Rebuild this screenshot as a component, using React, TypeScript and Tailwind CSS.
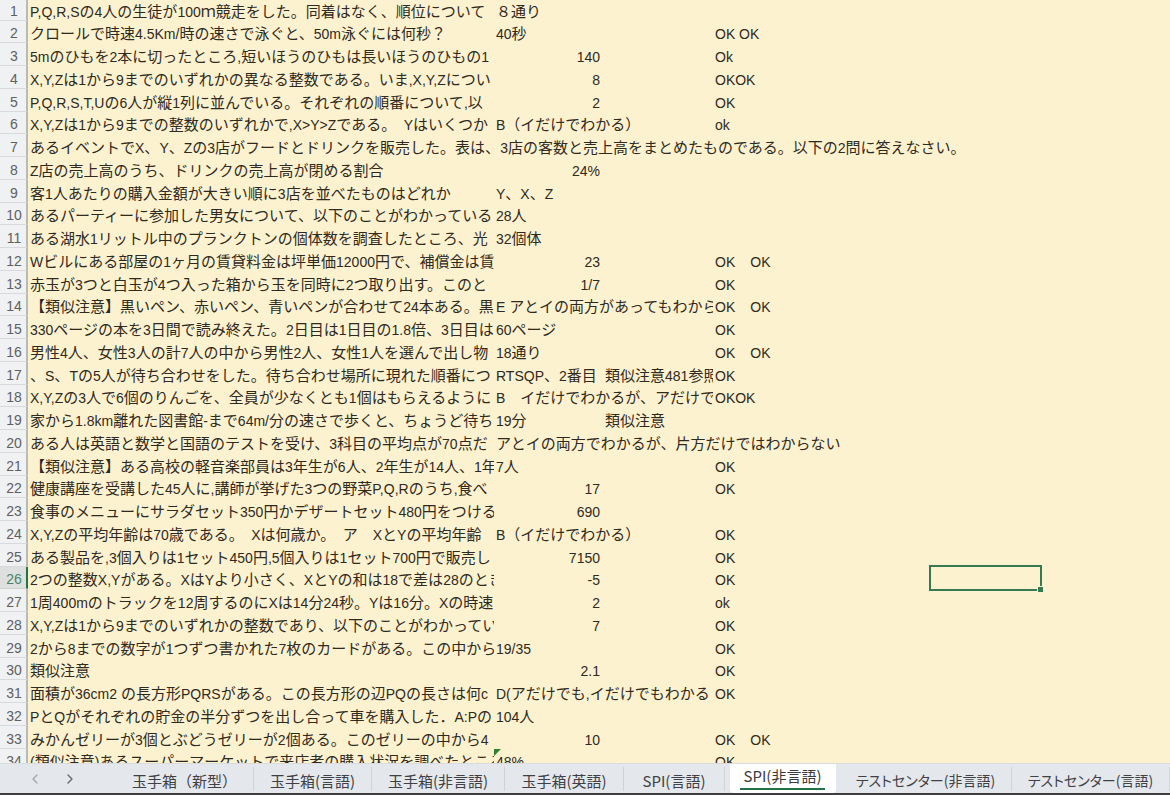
import { ChevronLeft, ChevronRight } from 'lucide-react';

type Cell = { text: string; span?: number; align?: 'right'; flagged?: boolean };

const n = (text: string): Cell => ({ text, align: 'right' });
const t = (text: string, span = 1): Cell => ({ text, span });
const gap = (span = 1): Cell => ({ text: '', span });

const rows: Cell[][] = [
  [t('P,Q,R,Sの4人の生徒が100ｍ競走をした。同着はなく、順位について'), t('８通り')],
  [t('クロールで時速4.5Km/時の速さで泳ぐと、50m泳ぐには何秒？'), t('40秒'), gap(), t('OK OK')],
  [t('5mのひもを2本に切ったところ,短いほうのひもは長いほうのひもの1'), n('140'), gap(), t('Ok')],
  [t('X,Y,Zは1から9までのいずれかの異なる整数である。いま,X,Y,Zについ'), n('8'), gap(), t('OKOK')],
  [t('P,Q,R,S,T,Uの6人が縦1列に並んでいる。それぞれの順番について,以'), n('2'), gap(), t('OK')],
  [t('X,Y,Zは1から9までの整数のいずれかで,X>Y>Zである。　Yはいくつか'), t('B（イだけでわかる）', 2), t('ok')],
  [t('あるイベントでX、Y、Zの3店がフードとドリンクを販売した。表は、3店の客数と売上高をまとめたものである。以下の2問に答えなさい。', 6)],
  [t('Z店の売上高のうち、ドリンクの売上高が閉める割合'), n('24%')],
  [t('客1人あたりの購入金額が大きい順に3店を並べたものはどれか'), t('Y、X、Z')],
  [t('あるパーティーに参加した男女について、以下のことがわかっている'), t('28人')],
  [t('ある湖水1リットル中のプランクトンの個体数を調査したところ、光'), t('32個体')],
  [t('Wビルにある部屋の1ヶ月の賃貸料金は坪単価12000円で、補償金は賃'), n('23'), gap(), t('OK　OK')],
  [t('赤玉が3つと白玉が4つ入った箱から玉を同時に2つ取り出す。このと'), n('1/7'), gap(), t('OK')],
  [t('【類似注意】黒いペン、赤いペン、青いペンが合わせて24本ある。黒'), t('E アとイの両方があってもわから', 2), t('OK　OK')],
  [t('330ページの本を3日間で読み終えた。2日目は1日目の1.8倍、3日目は'), t('60ページ'), gap(), t('OK')],
  [t('男性4人、女性3人の計7人の中から男性2人、女性1人を選んで出し物'), t('18通り'), gap(), t('OK　OK')],
  [t('、S、Tの5人が待ち合わせをした。待ち合わせ場所に現れた順番につ'), t('RTSQP、2番目'), t('類似注意481参照'), t('OK')],
  [t('X,Y,Zの3人で6個のりんごを、全員が少なくとも1個はもらえるように'), t('B　イだけでわかるが、アだけで', 2), t('OKOK')],
  [t('家から1.8km離れた図書館-まで64m/分の速さで歩くと、ちょうど待ち'), t('19分'), t('類似注意')],
  [t('ある人は英語と数学と国語のテストを受け、3科目の平均点が70点だ'), t('アとイの両方でわかるが、片方だけではわからない', 4)],
  [t('【類似注意】ある高校の軽音楽部員は3年生が6人、2年生が14人、1年'), t('7人'), gap(), t('OK')],
  [t('健康講座を受講した45人に,講師が挙げた3つの野菜P,Q,Rのうち,食べ'), n('17'), gap(), t('OK')],
  [t('食事のメニューにサラダセット350円かデザートセット480円をつける'), n('690')],
  [t('X,Y,Zの平均年齢は70歳である。　Xは何歳か。　ア　XとYの平均年齢'), t('B（イだけでわかる）', 2), t('OK')],
  [t('ある製品を,3個入りは1セット450円,5個入りは1セット700円で販売し'), n('7150'), gap(), t('OK')],
  [t('2つの整数X,Yがある。XはYより小さく、XとYの和は18で差は28のとき'), n('-5'), gap(), t('OK')],
  [t('1周400mのトラックを12周するのにXは14分24秒。Yは16分。Xの時速'), n('2'), gap(), t('ok')],
  [t('X,Y,Zは1から9までのいずれかの整数であり、以下のことがわかってい'), n('7'), gap(), t('OK')],
  [t('2から8までの数字が1つずつ書かれた7枚のカードがある。この中から'), t('19/35'), gap(), t('OK')],
  [t('類似注意'), n('2.1'), gap(), t('OK')],
  [t('面積が36cm2 の長方形PQRSがある。この長方形の辺PQの長さは何c'), t('D(アだけでも,イだけでもわかる', 2), t('OK')],
  [t('PとQがそれぞれの貯金の半分ずつを出し合って車を購入した．A:Pの'), t('104人')],
  [t('みかんゼリーが3個とぶどうゼリーが2個ある。このゼリーの中から4'), n('10'), gap(), t('OK　OK')],
  [t('(類似注意)あるスーパーマーケットで来店者の購入状況を調べたところ'), { text: '48%', flagged: true }, gap(), t('OK')],
];

const COLUMNS = 7;
const ACTIVE_ROW = 26;
const ACTIVE_COLUMN = 5;

const tabs = [
  { name: '玉手箱（新型）', style: 'w-[138px] text-[15px]' },
  { name: '玉手箱(言語)', style: 'w-[118px] text-[15px]' },
  { name: '玉手箱(非言語)', style: 'w-[133px] text-[15px]' },
  { name: '玉手箱(英語)', style: 'w-[119px] text-[15px]' },
  { name: 'SPI(言語)', style: 'w-[101px] text-[15px]' },
  { name: 'SPI(非言語)', style: 'w-[115px] text-[15px]', active: true },
  { name: 'テストセンター(非言語)', style: "w-[172px] text-[14px] [font-feature-settings:'palt']" },
  { name: 'テストセンター(言語)', style: "w-[158px] text-[14px] [font-feature-settings:'palt']" },
];

/** Latin runs are set one pixel smaller than the Japanese text around them. */
function MixedText({ text }: { text: string }) {
  return text
    .split(/([\x20-\x7e]+)/)
    .filter(Boolean)
    .map((run, i) =>
      /^[\x20-\x7e]/.test(run) ? (
        <span key={i} className="text-[14px]">
          {run}
        </span>
      ) : (
        run
      ),
    );
}

function Row({ cells, number }: { cells: Cell[]; number: number }) {
  const current = number === ACTIVE_ROW;
  const used = cells.reduce((sum, c) => sum + (c.span ?? 1), 0);
  const blanks = Array.from({ length: COLUMNS - used }, (_, i) => used + i);
  return (
    <tr className="h-[23px] first:h-[21px] [&:nth-child(4n+2)]:h-[22px]">
      <th
        scope="row"
        className={
          current
            ? 'border-r-2 border-b border-r-[#217346] border-b-[#d0d0d0] bg-[#dedfdf] p-0 pl-[2px] align-bottom text-[14px] font-normal text-[#4a8763]'
            : 'border-r-2 border-b border-r-[#b9bab4] border-b-[#d8d9da] bg-[#f0f1f2] p-0 pl-[2px] align-bottom text-[14px] font-normal text-[#5f6062]'
        }
      >
        {number}
      </th>
      {cells.map((cell, i) => (
        <td
          key={i}
          colSpan={cell.span ?? 1}
          className={
            cell.align === 'right'
              ? 'overflow-hidden p-0 pr-[3px] text-right align-bottom whitespace-pre'
              : 'relative overflow-hidden p-0 pl-[2px] align-bottom whitespace-pre'
          }
        >
          <MixedText text={cell.text} />
          {cell.flagged && (
            <svg className="absolute top-0 left-0 size-[7px] fill-[#2f8132]" viewBox="0 0 7 7" aria-hidden="true">
              <path d="M0 0h7L0 7z" />
            </svg>
          )}
        </td>
      ))}
      {blanks.map((column) => (
        <td key={column} className="relative p-0">
          {current && column === ACTIVE_COLUMN && (
            <div className="absolute -top-[2px] -right-px -bottom-[2px] -left-[2px] border-2 border-[#377a51]">
              <span className="absolute -right-[3px] -bottom-[3px] size-[6px] border-t border-l border-[#fdf2d0] bg-[#377a51]" />
            </div>
          )}
        </td>
      ))}
    </tr>
  );
}

export default function App() {
  return (
    <div className="flex h-screen flex-col overflow-hidden bg-[#fdf2d0] font-['Liberation_Sans','Noto_Sans_CJK_JP',sans-serif]">
      <main className="min-h-0 flex-1 overflow-hidden">
        <table className="w-full table-fixed border-separate border-spacing-0 text-[15px] leading-[18px] text-[#2f2a20]">
          <colgroup>
            <col className="w-[28px]" />
            <col className="w-[466px]" />
            <col className="w-[109px]" />
            <col className="w-[110px]" />
            <col className="w-[109px]" />
            <col className="w-[109px]" />
            <col className="w-[110px]" />
            <col />
          </colgroup>
          <tbody>
            {rows.map((cells, i) => (
              <Row key={i} cells={cells} number={i + 1} />
            ))}
          </tbody>
        </table>
      </main>
      <footer className="flex h-8 shrink-0 items-stretch overflow-hidden border-t border-b-2 border-t-[#d9dbdc] border-b-[#3f3d40] bg-[#e4e7eb] font-['Noto_Sans_CJK_JP',sans-serif]">
        <div className="flex w-[116px] shrink-0 items-center gap-[19px] pl-[27px]">
          <button type="button" aria-label="前のシート" className="text-[#a5a8ab]">
            <ChevronLeft size={16} strokeWidth={2} />
          </button>
          <button type="button" aria-label="次のシート" className="text-[#66696c]">
            <ChevronRight size={16} strokeWidth={2} />
          </button>
        </div>
        <nav aria-label="シート" className="flex shrink-0">
          {tabs.map((tab) => (
            <div key={tab.name} className={`flex shrink-0 items-center justify-center ${tab.style}`}>
              {tab.active ? (
                <button
                  type="button"
                  aria-current="page"
                  className="flex h-full w-[106px] items-start justify-center rounded-b bg-white leading-[24px] whitespace-nowrap text-[#3b3b3b]"
                >
                  <span className="border-b-2 border-[#217346] px-1">{tab.name}</span>
                </button>
              ) : (
                <button
                  type="button"
                  className="h-6 w-full border-r border-[#d0d3d7] pt-[3px] leading-[21px] whitespace-nowrap text-[#3f4145]"
                >
                  {tab.name}
                </button>
              )}
            </div>
          ))}
        </nav>
      </footer>
    </div>
  );
}
